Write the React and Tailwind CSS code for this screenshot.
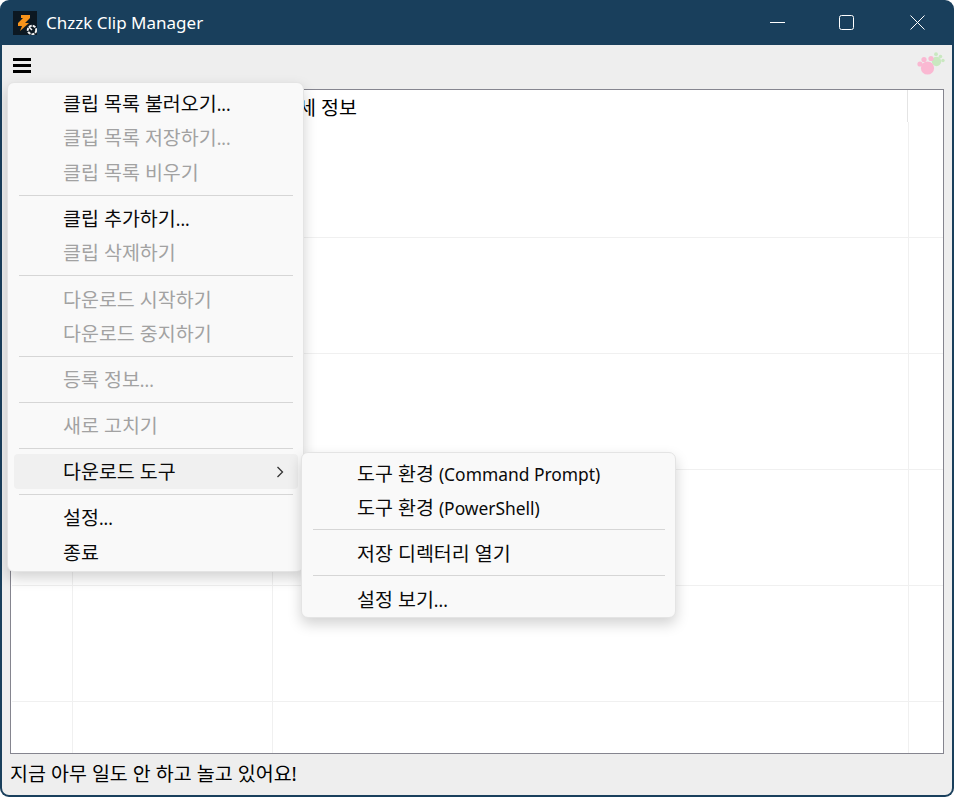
const FONT = "font-['Noto_Sans','Noto_Sans_CJK_KR',sans-serif]";

function L({ children }) {
  return <span className="text-[17.4px]">{children}</span>;
}

function Logo() {
  return (
    <svg width="24" height="24" viewBox="0 0 24 24" className="mr-[9px] shrink-0">
      <rect width="24" height="24" fill="#0c1822" />
      <path d="M8 4 H17 V7 L12 12 H16 L7 20 L9 15 H5 V12 L10 7 H8 Z" fill="#f7931a" />
      <circle cx="19" cy="19" r="4.2" fill="none" stroke="#f2f2f2" strokeWidth="2" strokeDasharray="3 1" />
      <path d="M19 19 L16 16" stroke="#f2f2f2" strokeWidth="1.5" />
    </svg>
  );
}

function Paw() {
  return (
    <svg width="32" height="26" viewBox="0 0 32 26" className="mt-[-6px] ml-[-1px] mr-[1px] shrink-0">
      <g fill="#c9e8c0">
        <circle cx="21.5" cy="10.5" r="4.7" />
        <circle cx="21" cy="3.2" r="1.9" />
        <circle cx="25.5" cy="5.5" r="1.8" />
        <circle cx="28" cy="9.5" r="1.7" />
      </g>
      <g fill="#fab8d2">
        <circle cx="12.5" cy="17" r="6.6" />
        <circle cx="5" cy="13" r="2.6" />
        <circle cx="9" cy="8.5" r="2.6" />
        <circle cx="16" cy="7.5" r="2.6" />
      </g>
    </svg>
  );
}

function Item({ children, disabled, active, arrow }) {
  return (
    <div
      className={`flex h-[34.6px] items-center rounded-[4px] pl-[49px] pr-[14px] pt-[1px] ${
        disabled ? "text-[#a2a2a2]" : "text-[#0a0a0a]"
      } ${active ? "bg-[#f0f0f0]" : ""} ${arrow ? "justify-between" : ""}`}
    >
      <span className="whitespace-nowrap">{children}</span>
      {arrow && (
        <svg width="10" height="12" viewBox="0 0 10 12" className="mr-[-1px]">
          <path d="M2.5 1 L7.5 6 L2.5 11" fill="none" stroke="#333" strokeWidth="1.3" />
        </svg>
      )}
    </div>
  );
}

function Sep() {
  return (
    <div className="flex h-[11.5px] items-center px-[5px]">
      <div className="h-px w-full bg-[#d6d6d6]" />
    </div>
  );
}

function Row({ h = "h-[116px]", last }) {
  return (
    <div className={`flex ${h} ${last ? "" : "border-b border-[#f0f0f0]"} ml-px`}>
      <div className="w-[61px] border-r border-[#f0f0f0]" />
      <div className="w-[199px] border-r border-[#f0f0f0] ml-px" />
      <div className="flex-1 border-r border-[#f0f0f0]" />
      <div className="w-[34px]" />
    </div>
  );
}

export default function App() {
  return (
    <div className={`${FONT} relative h-[797px] w-[954px] overflow-hidden bg-white text-[19.5px] leading-none text-black`}>
      <div className="flex h-full w-full flex-col rounded-[9px] bg-[#193f5c] px-[2px] pb-[2px]">
        <header className="flex h-[45px] shrink-0 items-center pl-[11px] text-white">
          <Logo />
          <span className="text-[17px]">Chzzk Clip Manager</span>
          <div className="ml-auto flex h-full items-center">
            <button className="flex h-full w-[71px] items-center justify-center pl-[4px]">
              <svg width="15" height="1" viewBox="0 0 15 1"><rect width="15" height="1" fill="#fff" /></svg>
            </button>
            <button className="flex h-full w-[71px] items-center justify-center">
              <svg width="15" height="15" viewBox="0 0 15 15">
                <rect x=".5" y=".5" width="14" height="14" rx="2" fill="none" stroke="#fff" />
              </svg>
            </button>
            <button className="flex h-full w-[70px] items-center justify-center pl-[1px]">
              <svg width="15" height="15" viewBox="0 0 15 15">
                <path d="M.5.5 14.5 14.5M14.5.5.5 14.5" fill="none" stroke="#fff" />
              </svg>
            </button>
          </div>
        </header>
        <main className="flex min-h-0 flex-1 flex-col rounded-b-[7px] bg-[#eeeeee]">
          <div className="flex h-[44px] shrink-0 items-center justify-between pl-[11px] pr-[4px]">
            <svg width="18" height="15" viewBox="0 0 18 15" className="mt-[-3px]">
              <path d="M0 0h18v3H0zM0 6h18v3H0zM0 12h18v3H0z" fill="#000" />
            </svg>
            <Paw />
          </div>
          <div className="mx-[8px] h-[665px] shrink-0 border border-[#85858f] bg-white">
            <div className="flex h-[32px]">
              <div className="w-[62px]" />
              <div className="w-[200px]" />
              <div className="flex-1 border-r border-[#e4e4e4] pl-[7px] pt-[8px]">상세 정보</div>
              <div className="w-[35px]" />
            </div>
            <Row />
            <Row />
            <Row />
            <Row />
            <Row />
            <Row h="h-[51px]" last />
          </div>
          <div className="flex flex-1 items-center pl-[8px] pb-[2px]">지금 아무 일도 안 하고 놀고 있어요!</div>
        </main>
      </div>

      <div className="absolute left-[7px] top-[82px] h-[490px] w-[297px] rounded-[7px] border border-[#e4e4e4] bg-[#f9f9f9] pl-[6px] pr-[5px] pt-[2.5px] shadow-[0_6px_14px_rgba(0,0,0,0.18)]">
        <Item>클립 목록 불러오기<L>...</L></Item>
        <Item disabled>클립 목록 저장하기<L>...</L></Item>
        <Item disabled>클립 목록 비우기</Item>
        <Sep />
        <Item>클립 추가하기<L>...</L></Item>
        <Item disabled>클립 삭제하기</Item>
        <Sep />
        <Item disabled>다운로드 시작하기</Item>
        <Item disabled>다운로드 중지하기</Item>
        <Sep />
        <Item disabled>등록 정보<L>...</L></Item>
        <Sep />
        <Item disabled>새로 고치기</Item>
        <Sep />
        <Item active arrow>다운로드 도구</Item>
        <Sep />
        <Item>설정<L>...</L></Item>
        <Item>종료</Item>
      </div>

      <div className="absolute left-[301px] top-[452px] h-[166px] w-[375px] rounded-[7px] border border-[#e4e4e4] bg-[#f9f9f9] pl-[6px] pr-[5px] pt-[2.5px] shadow-[0_6px_14px_rgba(0,0,0,0.18)]">
        <Item>도구 환경 <L>(Command Prompt)</L></Item>
        <Item>도구 환경 <L>(PowerShell)</L></Item>
        <div className="mt-[-0.7px]"><Sep /></div>
        <Item>저장 디렉터리 열기</Item>
        <Sep />
        <Item>설정 보기<L>...</L></Item>
      </div>
    </div>
  );
}
